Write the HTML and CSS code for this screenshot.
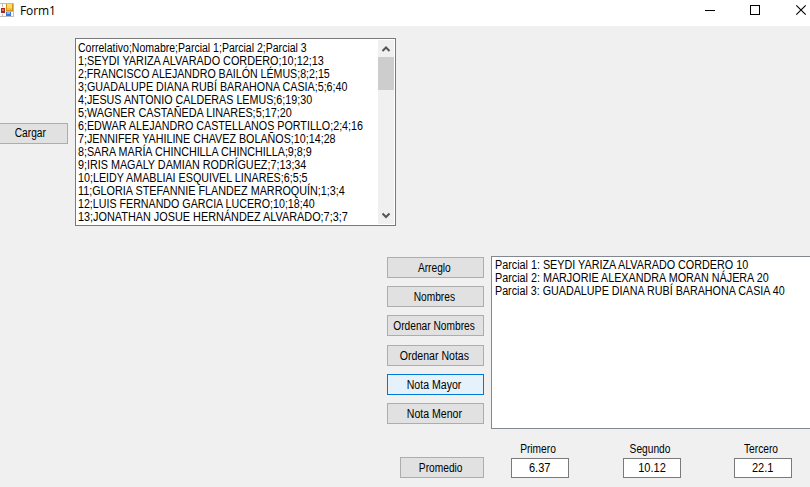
FILE: index.html
```
<!DOCTYPE html>
<html lang="es">
<head>
<meta charset="utf-8">
<title>Form1</title>
<link rel="stylesheet" href="styles.css">
</head>
<body>
<header class="titlebar">
  <svg class="app-icon" width="14" height="14" viewBox="0 0 14 14" shape-rendering="crispEdges">
    <path fill="#bdbdbd" d="M0 0h14v14H0z"/>
    <path fill="#fafafa" d="M0 1h2v3H0zM3 1h3v3H3zM0 4h6v7H0zM0 11h2v2H0zM3 11h2v2H3zM5 9h8v4H5z"/>
    <path fill="#a5281c" d="M1 5h4v5H1z"/>
    <path fill="#dc7468" d="M2 6h2v2H2z"/>
    <path fill="#cf941b" d="M6 1h7v7H6z"/>
    <path fill="#ffdb6b" d="M7 1h5v4H7z"/>
    <path fill="#f6bf38" d="M7 5h5v2H7z"/>
    <path fill="#3f73cf" d="M6 9h5v4H6z"/>
    <path fill="#8ab5f6" d="M7 9h3v2H7z"/>
  </svg>
  <h1 class="title">Form1</h1>
  <svg class="controls" width="105" height="26" viewBox="0 0 105 26" fill="none" stroke="#000">
    <path d="M0 10.5h10M45.5 5.5h9v9h-9z" shape-rendering="crispEdges"/>
    <path d="M91.3 5.3l9.4 9.4M100.7 5.3l-9.4 9.4" stroke-width="1.1"/>
  </svg>
</header>
<main class="form">
  <section class="top">
    <button class="btn load"><span>Cargar</span></button>
    <div class="textbox">
      <div class="lines">
        <p>Correlativo;Nomabre;Parcial 1;Parcial 2;Parcial 3</p>
        <p>1;SEYDI YARIZA ALVARADO CORDERO;10;12;13</p>
        <p>2;FRANCISCO ALEJANDRO BAILÓN LÉMUS;8;2;15</p>
        <p>3;GUADALUPE DIANA RUBÍ BARAHONA CASIA;5;6;40</p>
        <p>4;JESUS ANTONIO CALDERAS LEMUS;6;19;30</p>
        <p>5;WAGNER CASTAÑEDA LINARES;5;17;20</p>
        <p>6;EDWAR ALEJANDRO CASTELLANOS PORTILLO;2;4;16</p>
        <p>7;JENNIFER YAHILINE CHAVEZ BOLAÑOS;10;14;28</p>
        <p>8;SARA MARÍA CHINCHILLA CHINCHILLA;9;8;9</p>
        <p>9;IRIS MAGALY DAMIAN RODRÍGUEZ;7;13;34</p>
        <p>10;LEIDY AMABLIAI ESQUIVEL LINARES;6;5;5</p>
        <p>11;GLORIA STEFANNIE FLANDEZ MARROQUÍN;1;3;4</p>
        <p>12;LUIS FERNANDO GARCIA LUCERO;10;18;40</p>
        <p>13;JONATHAN JOSUE HERNÁNDEZ ALVARADO;7;3;7</p>
      </div>
      <div class="scrollbar">
        <svg width="16" height="17" viewBox="0 0 16 17" fill="none" stroke="#555" stroke-width="2"><path d="M4.5 11L8 7.5l3.5 3.5"/></svg>
        <div class="thumb"></div>
        <svg class="down" width="16" height="17" viewBox="0 0 16 17" fill="none" stroke="#555" stroke-width="2"><path d="M4.5 6.5L8 10l3.5-3.5"/></svg>
      </div>
    </div>
  </section>
  <section class="middle">
    <nav class="actions">
      <button class="btn"><span>Arreglo</span></button>
      <button class="btn"><span>Nombres</span></button>
      <button class="btn"><span>Ordenar Nombres</span></button>
      <button class="btn"><span class="wide">Ordenar Notas</span></button>
      <button class="btn active"><span class="wide">Nota Mayor</span></button>
      <button class="btn"><span class="wide">Nota Menor</span></button>
    </nav>
    <div class="listbox">
      <p>Parcial 1: SEYDI YARIZA ALVARADO CORDERO 10</p>
      <p>Parcial 2: MARJORIE ALEXANDRA MORAN NÁJERA 20</p>
      <p>Parcial 3: GUADALUPE DIANA RUBÍ BARAHONA CASIA 40</p>
    </div>
  </section>
  <section class="bottom">
    <button class="btn average"><span>Promedio</span></button>
    <label class="field"><span class="caption">Primero</span><span class="value"><span>6.37</span></span></label>
    <label class="field"><span class="caption">Segundo</span><span class="value"><span>10.12</span></span></label>
    <label class="field"><span class="caption">Tercero</span><span class="value"><span>22.1</span></span></label>
  </section>
</main>
</body>
</html>
```
FILE: styles.css
```
* { box-sizing: border-box; }
body {
  margin: 0;
  width: 810px;
  height: 487px;
  overflow: hidden;
  background: #f0f0f0;
  color: #000;
  font: 12px/13px "Liberation Sans", Arial, sans-serif;
}
p {
  width: max-content;
  margin: 0;
  white-space: pre;
  transform: scaleX(var(--fit, .894));
  transform-origin: left;
}
.lines p:nth-child(1) { --fit: .877; }
.lines p:nth-child(2) { --fit: .904; }
.lines p:nth-child(3) { --fit: .886; }
.lines p:nth-child(6) { --fit: .903; }
.lines p:nth-child(10) { --fit: .898; }
.lines p:nth-child(12) { --fit: .9; }
.lines p:nth-child(13) { --fit: .889; }
.lines p:nth-child(14) { --fit: .905; }
.listbox p:nth-child(-n+2) { --fit: .898; }
.titlebar { display: flex; height: 26px; background: #fff; }
.app-icon { margin-top: 3px; }
.title { margin: 3px 0 0 6px; font: 12px/16px "Open Sans", sans-serif; letter-spacing: -0.1px; }
.controls { margin-left: auto; }
.btn {
  height: 21px;
  padding: 2px 2px 0 0;
  border: 1px solid #adadad;
  border-radius: 0;
  background: #e1e1e1;
  color: #000;
  font: inherit;
  white-space: nowrap;
}
.btn span, .caption { display: inline-block; transform: scaleX(.85); }
.btn span { margin: 0 -10px; }
.btn .wide { transform: scaleX(.88); }
.btn.active { border-color: #0078d7; background: #e5f1fb; }
.top { display: flex; padding-top: 12px; }
.load { width: 69px; margin: 85px 7px 0 -1px; padding: 0 7px 0 0; }
.textbox {
  display: flex;
  justify-content: space-between;
  width: 321px;
  height: 188px;
  padding: 1px;
  border: 1px solid #7a7a7a;
  background: #fff;
}
.lines { width: 299px; padding: 2px 0 0 1px; }
.scrollbar { display: flex; flex: none; flex-direction: column; width: 16px; background: #f0f0f0; }
.scrollbar svg { display: block; }
.thumb { height: 33px; background: #cdcdcd; }
.down { margin-top: auto; }
.middle { display: flex; gap: 7px; padding: 30px 0 0 387px; }
.actions { display: grid; grid-template-columns: 97px; grid-template-rows: 29px 29px 30px 29px 29px 21px; padding-top: 1px; }
.listbox {
  flex: 1;
  min-width: 0;
  height: 173px;
  padding: 2px 3px;
  border: 1px solid #828790;
  border-right: 0;
  background: #fff;
}
.bottom { display: flex; padding: 14px 0 0 400px; }
.average { width: 84px; margin: 14px 27px 0 0; }
.field { display: flex; flex-direction: column; align-items: center; width: 58px; margin-right: 54px; }
.caption { margin-left: -4px; }
.field:last-child { margin: 0 0 0 -1px; }
.value { width: 58px; height: 20px; margin-top: 2px; border: 1px solid #7a7a7a; background: #fff; line-height: 18px; text-align: center; }
.value span { display: inline-block; transform: scaleX(.92); }
```
